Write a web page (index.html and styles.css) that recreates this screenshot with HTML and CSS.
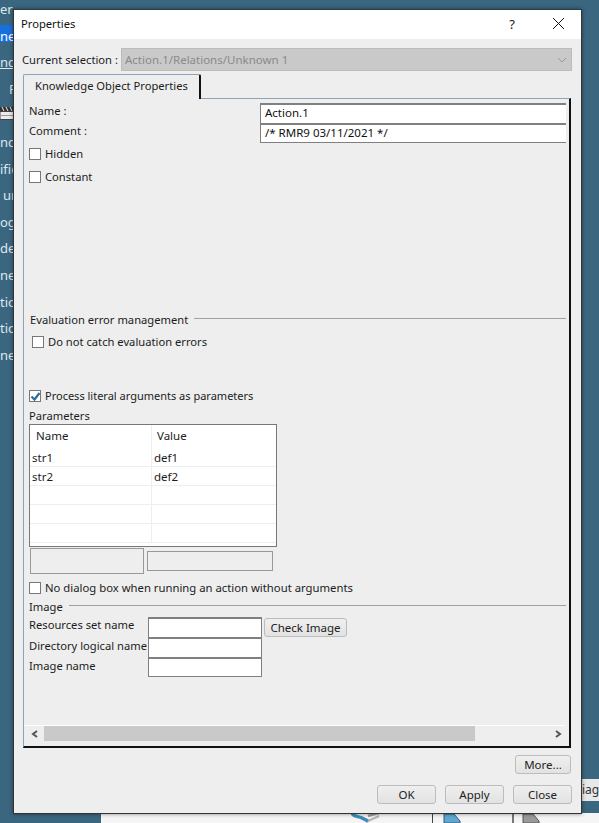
FILE: index.html
```html
<!DOCTYPE html>
<html lang="en">
<head>
<meta charset="utf-8">
<title>Properties</title>
<link rel="stylesheet" href="styles.css">
</head>
<body>
<div class="desktop">
  <ul class="side">
    <li>ers</li>
    <li class="sel">ne</li>
    <li class="und">nc</li>
    <li class="far">F</li>
    <li class="clap"><svg width="13" height="14" viewBox="0 0 13 14"><rect x="0" y="5.5" width="14" height="8" fill="#ececec" stroke="#444"/><path d="M0 9.5h13" stroke="#999"/><path d="M0 1h13v4H0z" fill="#333"/><path d="M2 1l2 4M6 1l2 4M10 1l2 4" stroke="#eee"/></svg></li>
    <li>nc</li>
    <li>ific</li>
    <li class="near">ur</li>
    <li>og</li>
    <li>de</li>
    <li>ne</li>
    <li>tio</li>
    <li>tio</li>
    <li>ne</li>
  </ul>
  <div class="strip">
    <svg class="strip-ic" width="32" height="10" viewBox="0 0 32 10"><path d="M17 3l14-4" stroke="#9a9a9a" stroke-width="2.5" fill="none"/><path d="M15 9L28 3" stroke="#b5b5b5" stroke-width="2" fill="none"/><path d="M1 0c1 4 6 3 10 5l6 3" stroke="#3f8cb8" stroke-width="3.5" fill="none"/></svg>
    <div class="strip-sep"></div>
    <svg width="20" height="10" viewBox="0 0 20 10"><path d="M1 10V1h10l6 7v2z" fill="#5fa8d3" stroke="#2b5f80"/></svg>
    <div class="strip-sep wide"></div>
    <svg width="20" height="10" viewBox="0 0 20 10"><path d="M1 10V1h10l6 7v2z" fill="#9a9a9a" stroke="#555"/></svg>
  </div>
  <div class="tabfrag">iagr</div>
</div>

<div class="dialog">
  <header class="title">
    <span class="title-text">Properties</span>
    <span class="help">?</span>
    <svg class="close" width="11" height="11" viewBox="0 0 11 11"><path d="M0 0l11 11M11 0L0 11" stroke="#111" stroke-width="1" fill="none"/></svg>
  </header>
  <div class="body">
    <div class="selection">
      <span class="sel-label">Current selection :</span>
      <div class="combo">
        <span>Action.1/Relations/Unknown 1</span>
        <svg width="10" height="6" viewBox="0 0 10 6"><path d="M1 1l4 4 4-4" stroke="#999" fill="none"/></svg>
      </div>
    </div>

    <div class="tabstrip">
      <div class="tab">Knowledge Object Properties</div>
      <div class="tabline"></div>
    </div>

    <section class="panel">
      <div class="inner">
        <div class="object">
          <div class="object-labels">
            <span class="lab">Name :</span>
            <span class="lab">Comment :</span>
          </div>
          <div class="object-fields">
            <div class="field">Action.1</div>
            <div class="field">/* RMR9 03/11/2021 */</div>
          </div>
        </div>
        <label class="check hidden-check"><i class="box"></i>Hidden</label>
        <label class="check constant-check"><i class="box"></i>Constant</label>

        <div class="group eval-group"><span>Evaluation error management</span><b></b></div>
        <label class="check catch-check"><i class="box"></i>Do not catch evaluation errors</label>

        <label class="check literal-check"><i class="box on"><svg width="11" height="11" viewBox="0 0 11 11"><path d="M1.5 5.5l3 3 5-6.5" stroke="#2d6f9f" stroke-width="2.2" fill="none"/></svg></i>Process literal arguments as parameters</label>

        <div class="params-lab">Parameters</div>
        <div class="table">
          <div class="thead"><span class="c1">Name</span><span class="c2">Value</span></div>
          <div class="row"><span class="c1">str1</span><span class="c2">def1</span></div>
          <div class="row"><span class="c1">str2</span><span class="c2">def2</span></div>
          <div class="row"><span class="c1"></span><span class="c2"></span></div>
          <div class="row"><span class="c1"></span><span class="c2"></span></div>
          <div class="row"><span class="c1"></span><span class="c2"></span></div>
        </div>
        <div class="under">
          <div class="under-a"></div>
          <div class="under-b"></div>
        </div>
        <label class="check nodialog-check"><i class="box"></i>No dialog box when running an action without arguments</label>

        <div class="group image-group"><span>Image</span><b></b></div>
        <div class="image-form">
          <div class="image-labels">
            <span>Resources set name</span>
            <span>Directory logical name</span>
            <span>Image name</span>
          </div>
          <div class="image-fields">
            <div class="field img"></div>
            <div class="field img"></div>
            <div class="field img"></div>
          </div>
          <button class="btn check-image">Check Image</button>
        </div>
      </div>
      <div class="hscroll">
        <svg width="8" height="8" viewBox="0 0 8 8"><path d="M6 1L2 4l4 3" stroke="#555" stroke-width="2" fill="none"/></svg>
        <div class="track"><div class="thumb"></div></div>
        <svg width="8" height="8" viewBox="0 0 8 8"><path d="M2 1l4 3-4 3" stroke="#555" stroke-width="2" fill="none"/></svg>
      </div>
    </section>

    <div class="more-row"><button class="btn more">More...</button></div>
    <div class="actions">
      <button class="btn act">OK</button>
      <button class="btn act">Apply</button>
      <button class="btn act">Close</button>
    </div>
  </div>
</div>
</body>
</html>
```
FILE: styles.css
```css
* { box-sizing: border-box; }
html, body { margin: 0; height: 100%; }
body {
  width: 599px; height: 823px; overflow: hidden; position: relative;
  background: #3b6680;
  font: 11.2px/16px "Noto Sans", "Open Sans", sans-serif;
  color: #1c1c1c;
}
.desktop { position: absolute; inset: 0; }
.side { list-style: none; margin: -4px 0 0; padding: 0; width: 13px; overflow: hidden; color: #dfe8ee; font-size: 13px; white-space: nowrap; }
.side li { height: 26.6px; line-height: 26px; }
.side .sel { color: #fff; background: linear-gradient(#1a6fe0, #1a6fe0) 0 2px / 100% 17px no-repeat; }
.side .und { text-decoration: underline; }
.side .far { padding-left: 9px; }
.side .near { padding-left: 3px; }
.side .clap { padding-top: 4px; line-height: 0; }
.strip { position: absolute; left: 101px; top: 813px; right: 0; height: 10px; background: #f5f5f5; display: flex; align-items: flex-start; padding-left: 250px; }
.strip-sep { width: 1px; height: 10px; background: #444; margin: 0 10px 0 49px; flex: none; }
.strip-sep.wide { width: 2px; margin: 0 8px 0 49px; background: #777; }
.tabfrag { position: absolute; left: 581px; top: 779px; width: 18px; height: 22px; padding-left: 1px; background: #e8e8e8; color: #333; line-height: 22px; overflow: hidden; font-size: 12px; }

.dialog { position: absolute; left: 13px; top: 9px; width: 569px; height: 805px; background: #eeeeee; border: 1px solid #333; border-top-color: #2a3c48; box-shadow: 0 0 4px rgba(0,0,0,.45); display: flex; flex-direction: column; }
.title { height: 29px; background: #fff; display: flex; align-items: center; padding: 0 17px 2px 7px; flex: none; }
.title-text { flex: 1; color: #111; }
.help { font-size: 13px; margin-right: 38px; color: #222; }
.body { flex: 1; display: flex; flex-direction: column; padding: 9px 9px 0 8px; min-height: 0; }
.selection { display: flex; align-items: center; height: 23px; flex: none; }
.sel-label { width: 99px; }
.combo { flex: 1; height: 23px; background: #c9c9c9; border: 1px solid #bcbcbc; display: flex; justify-content: space-between; align-items: center; padding: 0 4px 0 3px; color: #8a8a8a; font-size: 11.5px; }
.tabstrip { display: flex; height: 25px; margin: 3px 0 0 1px; flex: none; }
.tab { width: 178px; height: 25px; border: 1px solid #8ba3bb; border-bottom: 0; border-right: 2px solid #111; border-radius: 2px 2px 0 0; padding: 3px 0 0 11px; position: relative; z-index: 2; background: #eee; }
.tabline { flex: 1; border-bottom: 1px solid #8ba3bb; margin-right: 1px; }
.panel { height: 650px; margin: -1px 1px 0 1px; border-left: 1px solid #8ba3bb; border-right: 2px solid #111; border-bottom: 2px solid #111; border-top: 1px solid transparent; flex: none; display: flex; flex-direction: column; position: relative; z-index: 1; }
.inner { flex: 1; padding: 4px 3px 0 5px; display: flex; flex-direction: column; min-height: 0; }

.object { display: flex; height: 44px; flex: none; }
.object-labels { width: 231px; display: flex; flex-direction: column; flex: none; }
.lab { display: block; height: 20px; line-height: 16px; }
.object-fields { flex: 1; }
.field { height: 20px; background: #fff; border-top: 2px solid #808080; border-left: 1px solid #808080; padding-left: 4px; line-height: 15px; color: #111; font-size: 11.5px; }
.object-fields .field:last-child { border-bottom: 1px solid #808080; }

.check { display: flex; align-items: center; gap: 4px; height: 16px; flex: none; }
.box { width: 12px; height: 12px; background: #fff; border: 1px solid #777; display: block; flex: none; position: relative; }
.box.on svg { position: absolute; left: 0; top: 0; }
.hidden-check { margin-top: -1px; }
.constant-check { margin-top: 7px; }
.group { display: flex; align-items: center; gap: 6px; flex: none; }
.group b { flex: 1; height: 1px; background: #a0a0a0; display: block; margin-top: -3px; }
.eval-group { margin-top: 127px; padding-left: 1px; }
.catch-check { margin-top: 6px; padding-left: 3px; }
.literal-check { margin-top: 38px; font-size: 11px; }
.params-lab { margin-top: 4px; line-height: 15px; height: 16px; flex: none; }
.table { width: 248px; height: 123px; background: #fff; border: 1px solid #777; overflow: hidden; flex: none; font-size: 11.5px; }
.thead { display: flex; height: 23px; line-height: 22px; }
.thead .c1 { width: 122px; padding-left: 6px; border-right: 1px solid #eee; }
.thead .c2 { padding-left: 5px; }
.row { display: flex; height: 19px; border-bottom: 1px solid #eee; line-height: 19px; }
.row .c1 { width: 122px; padding-left: 2px; border-right: 1px solid #eee; }
.row .c2 { padding-left: 2px; flex: 1; }
.under { display: flex; align-items: flex-start; margin: 1px 0 0 1px; flex: none; }
.under-a { width: 114px; height: 26px; border: 1px solid #999; }
.under-b { width: 126px; height: 20px; border: 1px solid #999; margin: 3px 0 0 3px; }
.nodialog-check { margin-top: 6px; font-size: 11.3px; }
.image-group { margin-top: 3px; }
.image-form { display: flex; align-items: flex-start; flex: none; }
.image-labels { width: 119px; padding-top: 2px; display: flex; flex-direction: column; white-space: nowrap; flex: none; }
.image-labels span { height: 20.5px; line-height: 16px; }
.image-fields { width: 114px; margin-top: 2px; flex: none; }
.field.img { border: 1px solid #808080; border-top-width: 2px; border-bottom: 0; }
.field.img:last-child { border-bottom: 1px solid #808080; }
.btn { font: inherit; font-size: 11.5px; color: #222; background: linear-gradient(#efefef, #e2e2e2); border: 1px solid #bcbcbc; border-radius: 3px; padding: 0; cursor: default; }
.check-image { width: 83px; height: 19px; margin: 3px 0 0 2px; line-height: 16px; flex: none; }
.hscroll { height: 16px; margin: 0 4px 5px 0; display: flex; align-items: center; padding: 0 3px 0 7px; border-top: 1px solid #fff; flex: none; }
.track { flex: 1; height: 15px; margin-left: 5px; }
.thumb { width: 431px; height: 15px; background: #c9c9c9; }
.more-row { display: flex; justify-content: flex-end; margin-top: 7px; flex: none; padding-right: 1px; }
.more { width: 56px; height: 19px; }
.actions { display: flex; justify-content: flex-end; gap: 9px; margin-top: 11px; flex: none; }
.act { width: 59px; height: 19px; }
```
